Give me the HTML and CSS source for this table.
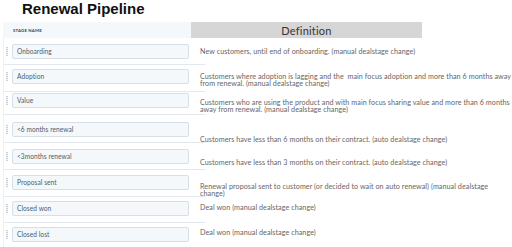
FILE: index.html
```html
<!DOCTYPE html>
<html lang="en">
<head>
<meta charset="utf-8">
<title>Renewal Pipeline</title>
<link rel="stylesheet" href="styles.css">
</head>
<body>
<div class="page">
  <h1 class="title">Renewal Pipeline</h1>
  <div class="header">
    <div class="header-stage">Stage name</div>
    <div class="header-def">Definition</div>
  </div>
  <div class="rows">
    <div class="row">
      <div class="stage"><span class="handle"></span><div class="input">Onboarding</div></div>
      <div class="def">New customers, until end of onboarding. (manual dealstage change)</div>
    </div>
    <div class="row">
      <div class="stage"><span class="handle"></span><div class="input">Adoption</div></div>
      <div class="def">Customers where adoption is lagging and the&nbsp; main focus adoption and more than 6 months away from renewal. (manual dealstage change)</div>
    </div>
    <div class="row">
      <div class="stage"><span class="handle"></span><div class="input">Value</div></div>
      <div class="def">Customers who are using the product and with main focus sharing value and more than 6 months away from renewal. (manual dealstage change)</div>
    </div>
    <div class="row">
      <div class="stage"><span class="handle"></span><div class="input">&lt;6 months renewal</div></div>
      <div class="def">Customers have less than 6 months on their contract. (auto dealstage change)</div>
    </div>
    <div class="row">
      <div class="stage"><span class="handle"></span><div class="input">&lt;3months renewal</div></div>
      <div class="def">Customers have less than 3 months on their contract. (auto dealstage change)</div>
    </div>
    <div class="row">
      <div class="stage"><span class="handle"></span><div class="input">Proposal sent</div></div>
      <div class="def">Renewal proposal sent to customer (or decided to wait on auto renewal) (manual dealstage change)</div>
    </div>
    <div class="row">
      <div class="stage"><span class="handle"></span><div class="input">Closed won</div></div>
      <div class="def">Deal won (manual dealstage change)</div>
    </div>
    <div class="row">
      <div class="stage"><span class="handle"></span><div class="input">Closed lost</div></div>
      <div class="def">Deal won (manual dealstage change)</div>
    </div>
  </div>
</div>
</body>
</html>
```

FILE: styles.css
```css
html, body {
  margin: 0;
  padding: 0;
  background: #ffffff;
}

body {
  font-family: Lato, "Open Sans", sans-serif;
  width: 512px;
  height: 247px;
  overflow: hidden;
}

.page {
  padding-left: 3px;
}

.title {
  margin: 0 0 4px 0;
  padding-left: 19px;
  font-family: "Liberation Sans", Arial, sans-serif;
  font-weight: bold;
  font-size: 15px;
  line-height: 18px;
  color: #111111;
}

.header {
  display: flex;
  height: 16px;
}

.header-stage {
  width: 188px;
  box-sizing: border-box;
  padding-left: 10px;
  background: #f5f8fa;
  display: flex;
  align-items: center;
  font-size: 4.3px;
  font-weight: bold;
  text-transform: uppercase;
  letter-spacing: 0.2px;
  color: #33475b;
}

.header-def {
  width: 231px;
  background: #d6d6d6;
  display: flex;
  align-items: center;
  justify-content: center;
  font-size: 11px;
  letter-spacing: 0.2px;
  color: #333333;
}

.rows {
  display: flex;
  flex-direction: column;
}

.row {
  --h: 27px;
  --in-top: 5px;
  --def-top: 8px;
  display: flex;
  align-items: flex-start;
  height: var(--h);
}

.row:nth-child(1) { --h: 27px; --in-top: 6px; --def-top: 10px; }
.row:nth-child(2) { --h: 27px; --in-top: 4px; --def-top: 8px; }
.row:nth-child(3) { --h: 23px; --in-top: 1px; --def-top: 7px; }
.row:nth-child(4) { --h: 28px; --in-top: 7px; --def-top: 21px; }
.row:nth-child(5) { --h: 27px; --in-top: 6px; --def-top: 16px; }
.row:nth-child(6) { --h: 27px; --in-top: 5px; --def-top: 13px; }
.row:nth-child(7) { --h: 26px; --in-top: 4px; --def-top: 7px; }
.row:nth-child(8) { --h: 25px; --in-top: 4px; --def-top: 6px; }

.stage {
  width: 202px;
  height: 100%;
  box-sizing: border-box;
  border-bottom: 1px solid #e3e8ee;
  border-left: 1px solid #eef2f6;
  padding-top: var(--in-top);
  display: flex;
  align-items: flex-start;
}

.row:last-child .stage {
  border-bottom: none;
}

.handle {
  margin-left: 2px;
  margin-top: 3px;
  width: 2px;
  height: 9px;
  background: repeating-linear-gradient(to bottom, #c9d2dc 0, #c9d2dc 1px, #eef1f5 1px, #eef1f5 2px);
}

.input {
  margin-left: 4px;
  width: 177px;
  height: 15px;
  box-sizing: border-box;
  border: 1px solid #d6dee7;
  border-radius: 2px;
  background: #f5f8fa;
  padding-left: 4px;
  font-size: 6.6px;
  line-height: 13px;
  letter-spacing: 0.05px;
  color: #4a5d70;
  white-space: nowrap;
}

.def {
  margin-left: -5px;
  width: 311px;
  padding-top: var(--def-top);
  font-size: 7.2px;
  line-height: 7.3px;
  letter-spacing: 0.05px;
  color: #666666;
}
```
